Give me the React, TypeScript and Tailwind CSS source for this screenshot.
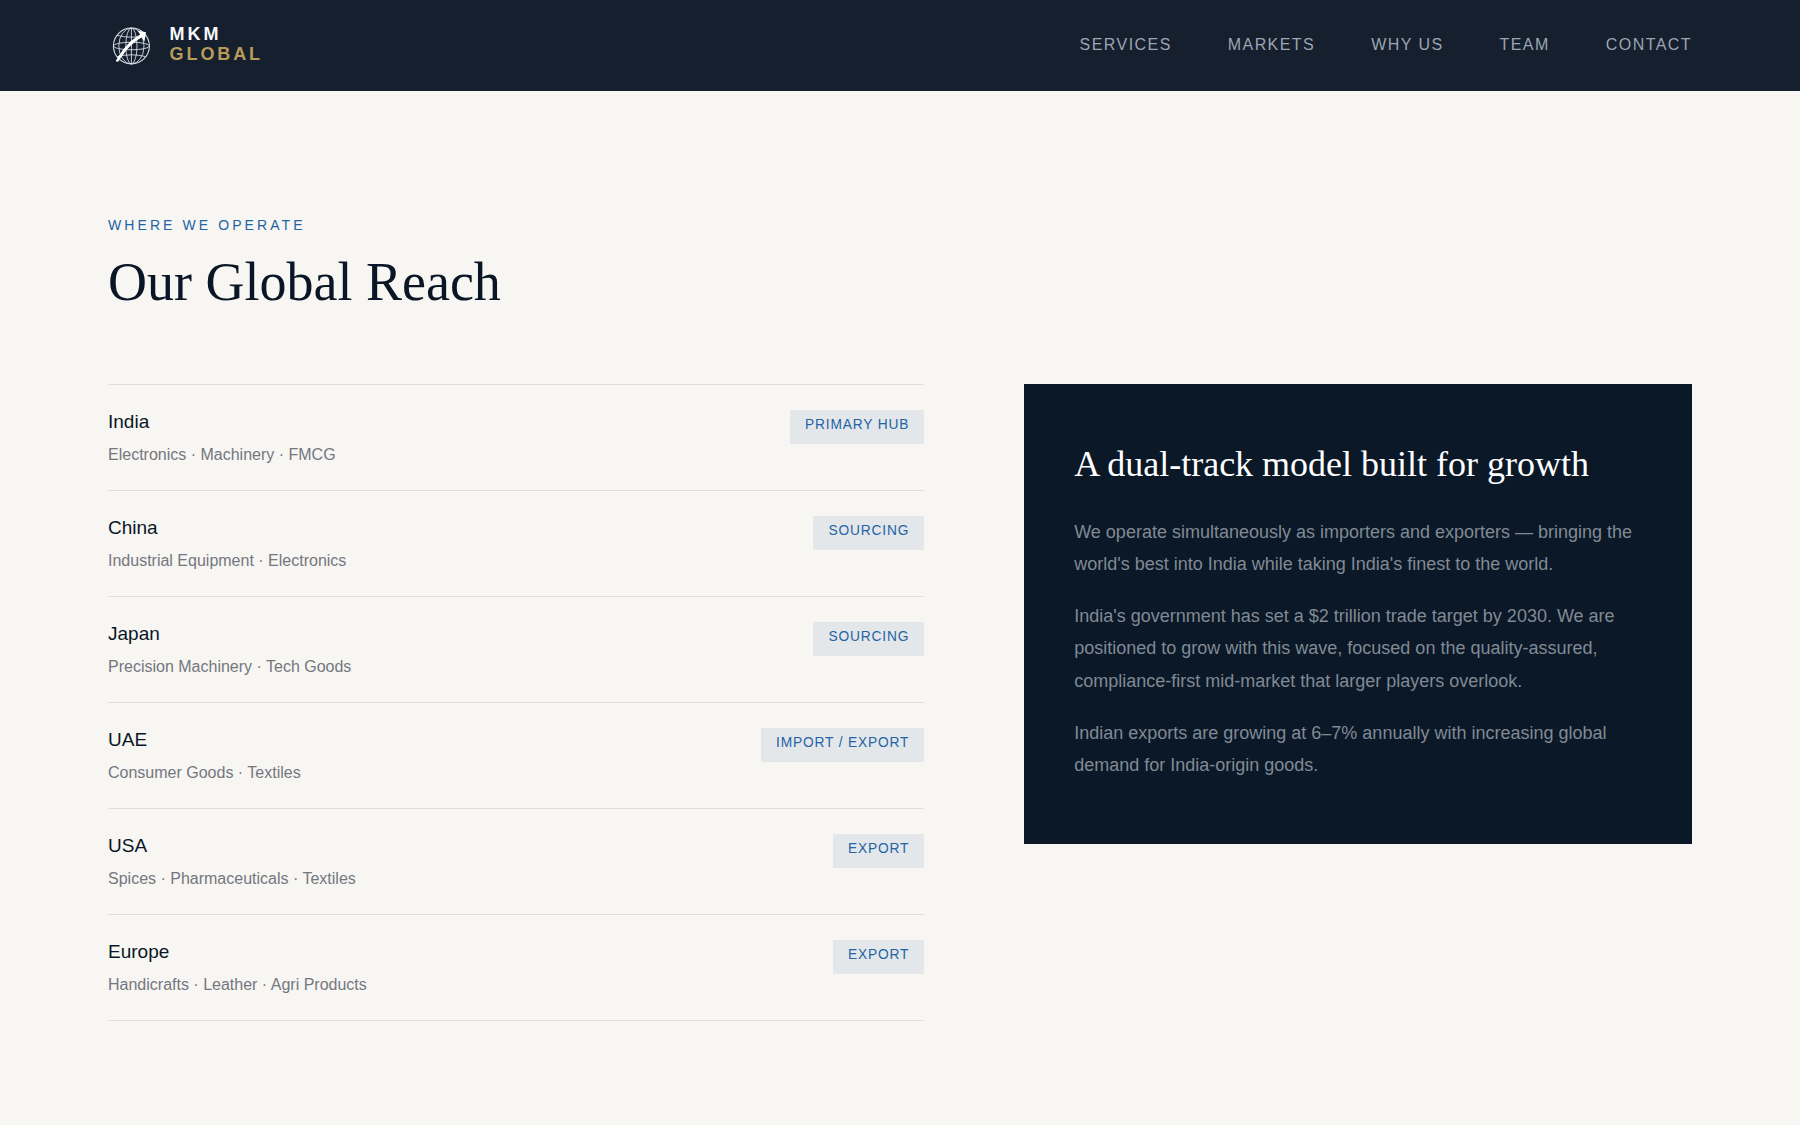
const navItems = ['Services', 'Markets', 'Why Us', 'Team', 'Contact'];

const markets = [
  { name: 'India', goods: 'Electronics · Machinery · FMCG', role: 'Primary Hub' },
  { name: 'China', goods: 'Industrial Equipment · Electronics', role: 'Sourcing' },
  { name: 'Japan', goods: 'Precision Machinery · Tech Goods', role: 'Sourcing' },
  { name: 'UAE', goods: 'Consumer Goods · Textiles', role: 'Import / Export' },
  { name: 'USA', goods: 'Spices · Pharmaceuticals · Textiles', role: 'Export' },
  { name: 'Europe', goods: 'Handicrafts · Leather · Agri Products', role: 'Export' },
];

const paragraphs = [
  "We operate simultaneously as importers and exporters — bringing the world's best into India while taking India's finest to the world.",
  "India's government has set a $2 trillion trade target by 2030. We are positioned to grow with this wave, focused on the quality-assured, compliance-first mid-market that larger players overlook.",
  'Indian exports are growing at 6–7% annually with increasing global demand for India-origin goods.',
];

function GlobeLogo() {
  return (
    <svg className="h-[46px] w-[46px]" viewBox="0 0 46 46" fill="none" aria-hidden="true">
      <g stroke="#d3dae4" strokeWidth="0.9">
        <circle cx="23.4" cy="23" r="18" strokeWidth="1.1" />
        <ellipse cx="23.4" cy="23" rx="5.6" ry="18" />
        <ellipse cx="23.4" cy="23" rx="12.6" ry="18" />
        <ellipse cx="23.4" cy="23" rx="18" ry="3.8" />
        <path d="M23.4 5v36" />
        <path d="M9 12.4q14.4 3.6 28.8 0" />
        <path d="M9 33.6q14.4-3.6 28.8 0" />
      </g>
      <path d="M7.6 38.2C15 25.6 22.2 17.2 32.2 11.6L29.4 7.4 38 9.2 36.4 18.8 33.8 14.4C24 19.6 17 28 10.2 38.8Z" fill="#fff" />
    </svg>
  );
}

export default function App() {
  return (
    <div className="h-[1125px] w-full overflow-hidden bg-[#f7f6f2] font-['Liberation_Sans',Arial,sans-serif] text-[#0a1626]">
      <header className="flex h-[91px] items-center justify-between bg-[#151f2e] px-[108px]">
        <div className="flex items-center gap-[15.6px]">
          <GlobeLogo />
          <div className="mt-[-4px] text-[18px] leading-[20px] font-bold tracking-[2.9px] uppercase">
            <div className="text-[#f7fafc]">MKM</div>
            <div className="text-[#b99b5a]">Global</div>
          </div>
        </div>
        <nav className="flex gap-[56px] pb-px text-[16px] leading-6 tracking-[1.44px] text-[#9ca5b2] uppercase">
          {navItems.map((item) => (
            <a key={item}>{item}</a>
          ))}
        </nav>
      </header>

      <main className="px-[108px] pt-[125px]">
        <p className="text-[14px] leading-[18px] tracking-[3.08px] text-[#2463a6] uppercase">Where we operate</p>
        <h1 className="mt-[16px] font-['Liberation_Serif','Times_New_Roman',serif] text-[54px] leading-[64px]">Our Global Reach</h1>

        <div className="mt-[70px] grid grid-cols-[1.1fr_0.9fr] items-start gap-[100px]">
          <ul className="border-t border-[#dededc]">
            {markets.map((market) => (
              <li key={market.name} className="flex h-[106px] items-start justify-between border-b border-[#dededc] pt-[25px]">
                <div className="mt-[-0.6px]">
                  <h2 className="text-[19px] leading-[26px]">{market.name}</h2>
                  <p className="mt-[8px] text-[16px] leading-6 text-[#747780]">{market.goods}</p>
                </div>
                <span className="h-[33.6px] bg-[#e3e7ea] px-[15px] pt-[6px] text-[13.75px] leading-[18px] tracking-[0.06em] text-[#2463a6] uppercase">
                  {market.role}
                </span>
              </li>
            ))}
          </ul>

          <section className="h-[460px] bg-[#0a1827] px-[50px] pt-[59px]">
            <h2 className="font-['Liberation_Serif','Times_New_Roman',serif] text-[36px] leading-[43px] text-white">
              A dual-track model built for growth
            </h2>
            <div className="mt-[30px] flex flex-col gap-[20px] text-[18px] leading-[32.4px] text-[#818a94]">
              {paragraphs.map((paragraph) => (
                <p key={paragraph} className="first:-mb-px">{paragraph}</p>
              ))}
            </div>
          </section>
        </div>
      </main>
    </div>
  );
}
